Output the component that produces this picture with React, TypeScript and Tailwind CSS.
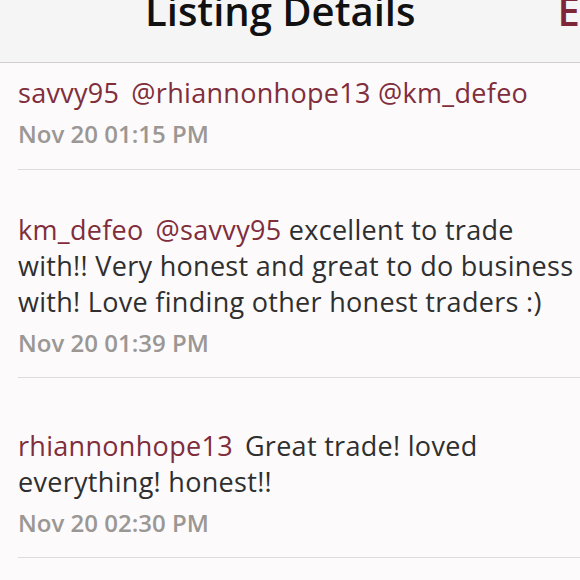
import React from "react";

export default function App() {
  return (
    <div
      className="w-[580px] h-[580px] overflow-hidden bg-[#fcfafb] flex flex-col"
      style={{ fontFamily: '"Open Sans", "Lato", sans-serif' }}
    >
      <div className="h-[63px] shrink-0 bg-[#f6f5f6] border-b border-[#cfcdcf] flex items-start overflow-hidden whitespace-nowrap">
        <div className="ml-[145px] -mt-[13px] text-[40px] leading-[48px] font-semibold text-[#111111]">
          Listing Details
        </div>
        <div className="ml-[142px] -mt-[13px] text-[40px] leading-[48px] font-semibold text-[#7e2637]">
          Edit
        </div>
      </div>

      <div className="ml-[18px] pt-[12px] pb-[17px] border-b border-[#dddbdc]">
        <div className="text-[27px] leading-[36px] tracking-[0.3px] text-[#2f2f2f]">
          <span className="text-[#802d3c]">savvy95</span>
          <span className="ml-[12px] text-[#802d3c]">@rhiannonhope13 @km_defeo</span>
        </div>
        <div className="mt-[5px] text-[24px] leading-[36px] font-semibold text-[#9a9794]">
          Nov 20 01:15 PM
        </div>
      </div>

      <div className="ml-[18px] pt-[42px] pb-[16px] border-b border-[#dddbdc]">
        <div className="text-[27px] leading-[36px] tracking-[0.3px] text-[#2f2f2f]">
          <span className="text-[#802d3c]">km_defeo</span>
          <span className="ml-[12px] text-[#802d3c]">@savvy95</span> excellent to trade with!! Very honest and great to do business with! Love finding other honest traders :)
        </div>
        <div className="mt-[5px] text-[24px] leading-[36px] font-semibold text-[#9a9794]">
          Nov 20 01:39 PM
        </div>
      </div>

      <div className="ml-[18px] pt-[50px] pb-[16px] border-b border-[#dddbdc]">
        <div className="text-[27px] leading-[36px] tracking-[0.3px] text-[#2f2f2f]">
          <span className="text-[#802d3c]">rhiannonhope13</span>
          <span className="ml-[12px]">Great trade! loved everything! honest!!</span>
        </div>
        <div className="mt-[5px] text-[24px] leading-[36px] font-semibold text-[#9a9794]">
          Nov 20 02:30 PM
        </div>
      </div>
    </div>
  );
}
